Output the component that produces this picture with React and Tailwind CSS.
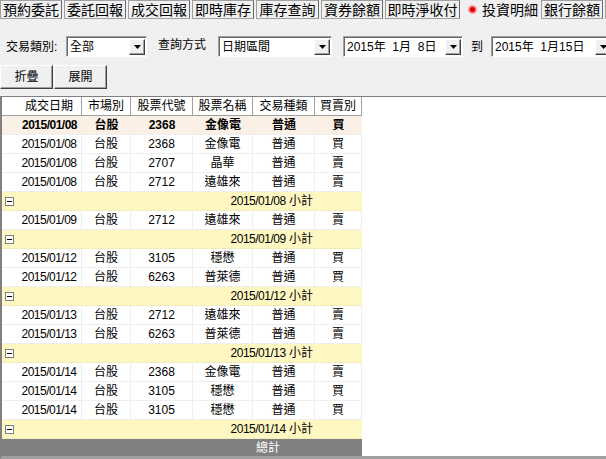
import React from 'react';

const FONT = { fontFamily: '"Liberation Sans", "Noto Sans CJK TC", sans-serif' };

const tabs = [
    { label: '預約委託', w: 'w-[62px]' },
    { label: '委託回報', w: 'w-[62px]' },
    { label: '成交回報', w: 'w-[62px]' },
    { label: '即時庫存', w: 'w-[62px]' },
    { label: '庫存查詢', w: 'w-[63px]' },
    { label: '資券餘額', w: 'w-[62px]' },
    { label: '即時淨收付', w: 'w-[75px]' },
];

const rows = [
    { type: 'bold', d: '2015/01/08', c: '2368', n: '金像電', s: '買' },
    { d: '2015/01/08', c: '2368', n: '金像電', s: '買' },
    { d: '2015/01/08', c: '2707', n: '晶華', s: '賣' },
    { d: '2015/01/08', c: '2712', n: '遠雄來', s: '賣' },
    { type: 'sub', d: '2015/01/08' },
    { d: '2015/01/09', c: '2712', n: '遠雄來', s: '賣' },
    { type: 'sub', d: '2015/01/09' },
    { d: '2015/01/12', c: '3105', n: '穩懋', s: '買' },
    { d: '2015/01/12', c: '6263', n: '普萊德', s: '買' },
    { type: 'sub', d: '2015/01/12' },
    { d: '2015/01/13', c: '2712', n: '遠雄來', s: '賣' },
    { d: '2015/01/13', c: '6263', n: '普萊德', s: '賣' },
    { type: 'sub', d: '2015/01/13' },
    { d: '2015/01/14', c: '2368', n: '金像電', s: '賣' },
    { d: '2015/01/14', c: '3105', n: '穩懋', s: '買' },
    { d: '2015/01/14', c: '3105', n: '穩懋', s: '買' },
    { type: 'sub', d: '2015/01/14' },
];

const cols = [
    { label: '成交日期', w: 'w-[80px] pl-[15px]' },
    { label: '市場別', w: 'w-[49px]' },
    { label: '股票代號', w: 'w-[62px]' },
    { label: '股票名稱', w: 'w-[60px]' },
    { label: '交易種類', w: 'w-[62px]' },
    { label: '買賣別', w: 'w-[47px]' },
];

const Arrow = () => (
    <div className="w-[16px] h-[16px] bg-[#f0f0f0] border border-t-white border-l-white border-r-[#404040] border-b-[#404040] shadow-[inset_-1px_-1px_0_#a0a0a0] flex items-center justify-center shrink-0">
        <svg width="7" height="4" viewBox="0 0 7 4">
            <polygon points="0,0 7,0 3.5,4" fill="#000" />
        </svg>
    </div>
);

const Combo = ({ text, w }) => (
    <div className={`${w} h-[21px] bg-white border border-t-[#a0a0a0] border-l-[#a0a0a0] border-r-white border-b-white shadow-[inset_1px_1px_0_#696969] flex items-center pl-[3px] pr-[1px] shrink-0`}>
        <span className="flex-1 whitespace-pre text-[12px] text-black leading-none">{text}</span>
        <Arrow />
    </div>
);

const Button = ({ children }) => (
    <div className="w-[53px] h-[24px] bg-[#f0f0f0] border border-t-white border-l-white border-r-[#404040] border-b-[#404040] shadow-[inset_-1px_-1px_0_#a0a0a0] flex items-center justify-center text-[12px] text-black">
        {children}
    </div>
);

const Minus = () => (
    <div className="w-[9px] h-[9px] border border-[#808080] bg-white flex items-center justify-center">
        <div className="w-[5px] h-px bg-black" />
    </div>
);

const DataRow = ({ r }) => {
    const bold = r.type === 'bold';
    const cells = [r.d, '台股', r.c, r.n, '普通', r.s];
    return (
        <div className={`flex h-[19px] border-b border-[#eeeeee] ${bold ? 'bg-[#fbf0e6] font-bold' : 'bg-white'}`}>
            {cells.map((v, i) => (
                <div
                    key={i}
                    className={`${cols[i].w} h-full flex items-center justify-center text-[12px] text-black ${bold ? '' : 'border-r border-[#eeeeee]'} ${i === 0 ? 'tracking-[-0.5px]' : ''}`}
                >
                    {v}
                </div>
            ))}
        </div>
    );
};

const SubRow = ({ r }) => (
    <div className="flex items-center h-[19px] bg-[#fff7c2] border-b border-[#f3ecb8] pl-[3px] pr-[49px]">
        <Minus />
        <span className="ml-auto text-[12px] text-black whitespace-pre">
            <span className="tracking-[-0.5px]">{r.d}</span> 小計
        </span>
    </div>
);

export default function App() {
    return (
        <div className="w-[606px] h-[459px] bg-[#f0f0f0] overflow-hidden flex flex-col" style={FONT}>
            {/* tab strip */}
            <div className="flex h-[20px] shrink-0 overflow-hidden whitespace-nowrap">
                {tabs.map((t, i) => (
                    <div
                        key={t.label}
                        className={`${t.w} ${i === 0 ? '' : 'ml-[2px]'} h-[19px] shrink-0 border border-[#a0a0a0] border-r-[#696969] flex items-center justify-center text-[14px] text-black leading-none`}
                    >
                        {t.label}
                    </div>
                ))}
                <div className="w-[78px] ml-[1px] h-[19px] shrink-0 flex items-center pl-[7px] text-[14px] text-black leading-none">
                    <svg width="9" height="9" viewBox="0 0 9 9" className="mr-[5px] shrink-0">
                        <circle cx="4.5" cy="4.5" r="4.3" fill="#ff8080" />
                        <circle cx="4.5" cy="4.5" r="2.6" fill="#e00000" />
                    </svg>
                    投資明細
                </div>
                <div className="w-[62px] ml-[2px] h-[19px] shrink-0 border border-[#a0a0a0] border-r-[#696969] flex items-center justify-center text-[14px] text-black leading-none">
                    銀行餘額
                </div>
                <div className="w-[20px] ml-[2px] h-[19px] shrink-0 border border-[#a0a0a0]" />
            </div>

            {/* filter row */}
            <div className="flex items-center h-[21px] mt-[16px] shrink-0 text-[12px] text-black whitespace-nowrap">
                <span className="ml-[6px] w-[60px] shrink-0">交易類別:</span>
                <Combo text="全部" w="w-[81px]" />
                <span className="ml-[11px] w-[60px] shrink-0 -mt-[4px]">查詢方式</span>
                <Combo text="日期區間" w="w-[114px]" />
                <div className="w-[11px] shrink-0" />
                <Combo text="2015年  1月  8日" w="w-[120px]" />
                <span className="ml-[8px] w-[20px] shrink-0">到</span>
                <Combo text="2015年  1月15日" w="w-[122px]" />
            </div>

            {/* buttons */}
            <div className="flex mt-[8px] shrink-0 gap-[1px]">
                <Button>折疊</Button>
                <Button>展開</Button>
            </div>

            {/* grid */}
            <div className="mt-[7px] flex-1 flex bg-white border-t border-l-2 border-[#808080] border-b-[3px] border-b-[#a0a0a0] overflow-hidden">
                <div className="w-[360px] flex flex-col shrink-0">
                    <div className="flex h-[19px] border-b border-[#a0a0a0] bg-white shrink-0">
                        {cols.map((c) => (
                            <div key={c.label} className={`${c.w} h-full flex items-center justify-center border-r border-[#a0a0a0] text-[12px] text-black`}>
                                {c.label}
                            </div>
                        ))}
                    </div>
                    {rows.map((r, i) =>
                        r.type === 'sub' ? <SubRow key={i} r={r} /> : <DataRow key={i} r={r} />
                    )}
                    <div className="flex items-center justify-end h-[17px] bg-[#808080] pr-[82px] text-[12px] text-white">
                        總計
                    </div>
                </div>
                <div className="flex-1 bg-white" />
            </div>
        </div>
    );
}
